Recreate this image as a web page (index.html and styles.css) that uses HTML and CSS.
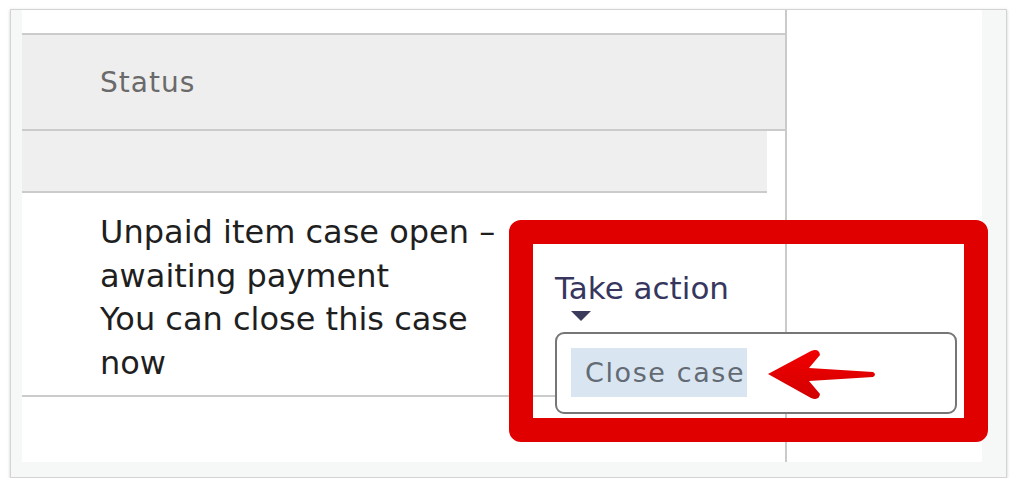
FILE: index.html
```html
<!DOCTYPE html>
<html lang="en">
<head>
  <meta charset="UTF-8">
  <title>Close case</title>
  <link rel="stylesheet" href="styles.css">
</head>
<body>
  <div class="shot">
    <div class="screen">
      <div class="table-area">
        <div class="head-row">
          <div class="head-cell">Status</div>
        </div>
        <div class="sub-row"></div>
        <div class="case-row">
          <div class="blank-cell"></div>
          <div class="status-cell">
            <p class="status-text">Unpaid item case open – awaiting payment<br>You can close this case now</p>
          </div>
          <div class="action-cell">
            <a class="take-action" href="#">Take action</a>
            <div class="caret"></div>
            <div class="menu">
              <div class="menu-item">Close case</div>
            </div>
          </div>
        </div>
      </div>
    </div>

    <div class="highlight-box"></div>
    <svg class="pointer" width="200" height="60" viewBox="0 0 200 60">
      <defs>
        <linearGradient id="red" x1="0" y1="0" x2="0" y2="1">
          <stop offset="0" stop-color="#f20000"/>
          <stop offset="1" stop-color="#d20000"/>
        </linearGradient>
      </defs>
      <path d="M21 29 L64 6 Q72 3 73 10 L62 23 L126 27 Q130 29.5 126 32 L62 36 L73 49 Q72 56 64 53 Z" fill="url(#red)"/>
    </svg>
  </div>
</body>
</html>
```

FILE: styles.css
```css
body {
  margin: 0;
  background-color: #ffffff;
  font-family: 'DejaVu Sans', sans-serif;
}
.shot {
  position: relative;
  box-sizing: border-box;
  width: 997px;
  height: 469px;
  margin: 9px 0 0 10px;
  padding: 0 24px 15px 11px;
  background-color: #f6f7f7;
  border: 1px solid #d4d4d4;
  box-shadow: 0 1px 3px rgba(0, 0, 0, 0.2);
}
.screen {
  display: flex;
  height: 100%;
  background-color: #ffffff;
}
.table-area {
  width: 763px;
  padding-top: 23px;
  border-right: 2px solid #cacaca;
}
.head-row {
  display: flex;
  align-items: center;
  height: 94px;
  background-color: #eeeeee;
  border-top: 2px solid #cbcbcb;
  border-bottom: 2px solid #cbcbcb;
}
.head-cell {
  padding-left: 78px;
  font-size: 28px;
  letter-spacing: 1px;
  color: #6a6a6a;
}
.sub-row {
  width: 745px;
  height: 60px;
  background-color: #efefef;
  border-bottom: 2px solid #cbcbcb;
}
.case-row {
  display: grid;
  grid-template-columns: 78px 455px 1fr;
  width: 745px;
  height: 202px;
  border-bottom: 2px solid #cbcbcb;
}
.status-cell {
  padding-top: 18px;
}
.status-text {
  margin: 0;
  max-width: 420px;
  font-size: 32px;
  line-height: 43.5px;
  color: #1f1f1f;
}
.action-cell {
  position: relative;
  padding-top: 77px;
}
.take-action {
  display: block;
  font-size: 31px;
  line-height: 36px;
  color: #36365e;
  text-decoration: none;
}
.caret {
  width: 0;
  height: 0;
  margin: 5px 0 0 16px;
  border-top: 10px solid #3b3b5c;
  border-left: 10px solid transparent;
  border-right: 10px solid transparent;
}
.menu {
  position: absolute;
  top: 139px;
  left: 0;
  box-sizing: border-box;
  width: 402px;
  height: 82px;
  padding: 14px 0 0 14px;
  background-color: #ffffff;
  border: 2px solid #767676;
  border-radius: 9px;
}
.menu-item {
  width: 162px;
  height: 49px;
  padding-left: 14px;
  white-space: nowrap;
  background-color: #d9e6f2;
  font-size: 27px;
  line-height: 49px;
  letter-spacing: 1.6px;
  color: #646a72;
}
.highlight-box {
  position: absolute;
  top: 210px;
  left: 498px;
  box-sizing: border-box;
  width: 479px;
  height: 222px;
  border: 24px solid #e10000;
  border-radius: 12px;
}
.pointer {
  position: absolute;
  top: 335px;
  left: 736px;
}
```
